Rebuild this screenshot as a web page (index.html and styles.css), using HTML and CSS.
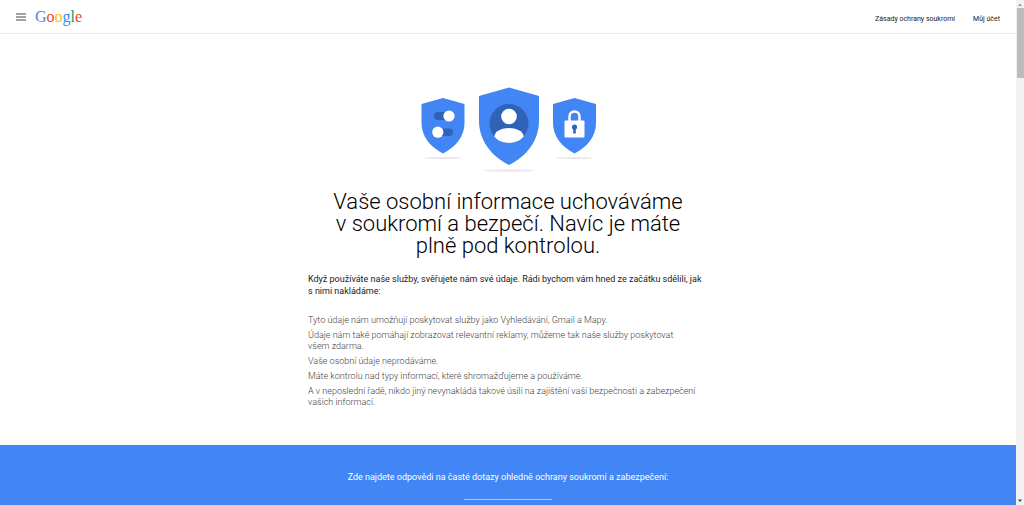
FILE: index.html
```html
<!DOCTYPE html>
<html lang="cs">
<head>
<meta charset="utf-8">
<title>Google – soukromí a zabezpečení</title>
<link rel="stylesheet" href="styles.css">
</head>
<body>
<div class="window">
  <div class="page">
    <header class="topbar">
      <button class="menu" type="button" aria-label="Nabídka">
        <svg width="10" height="8" viewBox="0 0 10 8"><path d="M0 1h10M0 4h10M0 7h10" stroke="#858585" stroke-width="1.300"/></svg>
      </button>
      <a class="logo" href="#" aria-label="Google"><span class="b">G</span><span class="r">o</span><span class="y">o</span><span class="b">g</span><span class="g">l</span><span class="r">e</span></a>
      <nav class="links">
        <a href="#">Zásady ochrany soukromí</a>
        <a href="#">Můj účet</a>
      </nav>
    </header>
    <main>
      <section class="intro">
        <svg class="shields" width="176" height="86" viewBox="-1 0 176 86" aria-hidden="true">
          <g fill="#4285f4">
            <path d="M22 11 L43.500 17 V36 C43.500 49 35 60 22 66.500 C9 60 .5 49 .5 36 V17Z"/>
            <path d="M88 .5 L118 9 V34 C118 53 106 69 88 78 C70 69 58 53 58 34 V9Z"/>
            <path d="M153.500 11 L175 17 V36 C175 49 166.500 60 153.500 66.500 C140.500 60 132 49 132 36 V17Z"/>
          </g>
          <g fill="#3063b8">
            <rect x="13" y="25" width="18" height="8" rx="4"/>
            <rect x="13" y="41.500" width="19" height="7.500" rx="3.700"/>
            <circle cx="88" cy="36.500" r="19.500"/>
          </g>
          <g fill="#fff">
            <circle cx="28" cy="29" r="5.600"/>
            <circle cx="16.800" cy="45.200" r="5.600"/>
            <circle cx="88" cy="29.500" r="7.800"/>
            <path d="M73.300 49.500 C74.500 38 101.500 38 102.700 49.500 C96 58 80 58 73.300 49.500Z"/>
            <rect x="143.500" y="33.500" width="20" height="17" rx="1"/>
          </g>
          <path d="M148.500 34 V29.500 A5 5 0 0 1 158.500 29.500 V34" fill="none" stroke="#fff" stroke-width="2.500"/>
          <path d="M153.500 37.500a2.600 2.600 0 0 1 1.300 4.900V46.500h-2.600V42.400a2.600 2.600 0 0 1 1.300-4.900Z" fill="#3063b8"/>
          <g fill="#e8e8e8">
            <ellipse cx="22" cy="71" rx="18.500" ry="1"/>
            <ellipse cx="88" cy="83.500" rx="25" ry="1.200"/>
            <ellipse cx="153.500" cy="71" rx="18.500" ry="1"/>
          </g>
        </svg>
        <h1>Vaše osobní informace uchováváme v&nbsp;soukromí a bezpečí. Navíc je máte plně pod kontrolou.</h1>
        <p class="lead">Když používáte naše služby, svěřujete nám své údaje. Rádi bychom vám hned ze začátku sdělili, jak s&nbsp;nimi nakládáme:</p>
        <ul class="points">
          <li>Tyto údaje nám umožňují poskytovat služby jako Vyhledávání, Gmail a Mapy.</li>
          <li>Údaje nám také pomáhají zobrazovat relevantní reklamy, můžeme tak naše služby poskytovat všem&nbsp;zdarma.</li>
          <li>Vaše osobní údaje neprodáváme.</li>
          <li>Máte kontrolu nad typy informací, které shromažďujeme a používáme.</li>
          <li>A v neposlední řadě, nikdo jiný nevynakládá takové úsilí na zajištění vaší bezpečnosti a zabezpečení vašich&nbsp;informací.</li>
        </ul>
      </section>
      <section class="faq">
        <p>Zde najdete odpovědi na časté dotazy ohledně ochrany soukromí a zabezpečení:</p>
        <hr>
      </section>
    </main>
  </div>
  <div class="scrollbar" aria-hidden="true">
    <svg width="8" height="8" viewBox="0 0 8 8"><path d="M2 6l2-2.500L6 6z" fill="#999"/></svg>
    <div class="thumb"></div>
    <svg width="8" height="8" viewBox="0 0 8 8"><path d="M2 2.500h4L4 5z" fill="#444"/></svg>
  </div>
</div>
</body>
</html>
```
FILE: styles.css
```css
* { box-sizing: border-box; }
body {
  margin: 0;
  background: #fff;
  color: #212121;
  font-family: Roboto, "Liberation Sans", sans-serif;
}
.window {
  display: grid;
  grid-template-columns: 1fr 8px;
  height: 100vh;
  overflow: hidden;
}
.page {
  display: flex;
  flex-direction: column;
  overflow: hidden;
}
.topbar {
  display: flex;
  align-items: center;
  flex: none;
  height: 34px;
  padding: 0 16px;
  border-bottom: 1px solid #e8e8e8;
}
.menu {
  display: flex;
  margin: 0;
  padding: 0;
  border: 0;
  background: none;
}
.logo {
  margin-left: 9px;
  font: 16px/24px "Liberation Serif", serif;
  text-decoration: none;
}
.b { color: #4285f4; }
.r { color: #ea4335; }
.y { color: #fbbc05; }
.g { color: #0f9d58; }
.links {
  display: flex;
  gap: 18px;
  margin-left: auto;
  padding-top: 4px;
}
.links a {
  color: #212121;
  font-size: 7px;
  line-height: 10px;
  text-decoration: none;
}
main {
  display: flex;
  flex: 1 0 auto;
  flex-direction: column;
}
.intro {
  width: 400px;
  max-width: 100%;
  margin: 0 auto;
  padding: 53px 0 33px;
}
.shields {
  display: block;
  margin: 0 auto;
}
h1 {
  margin: 18px 24px 0;
  color: #000;
  font-size: 22px;
  font-weight: 300;
  line-height: 22px;
  text-align: center;
}
.lead {
  margin: 16px 0 0;
  font-size: 9px;
  line-height: 12px;
}
.points {
  margin: 18px 0 0;
  padding: 0;
  color: #424242;
  font-size: 9px;
  font-weight: 300;
  line-height: 11px;
  list-style: none;
}
.points li { margin-bottom: 4px; }
.faq {
  flex: 1;
  padding: 26px 12px 5px;
  background: #4285f4;
  color: #fff;
  font-size: 9px;
  line-height: 12px;
  text-align: center;
}
.faq p { margin: 0; }
.faq hr {
  width: 88px;
  height: 1px;
  margin: 16px auto 0;
  border: 0;
  background: #a9c5f8;
}
.scrollbar {
  display: flex;
  flex-direction: column;
  align-items: center;
  background: #f1f1f1;
}
.thumb {
  width: 7px;
  height: 70px;
  margin-bottom: auto;
  background: #bcbcbc;
}
```
